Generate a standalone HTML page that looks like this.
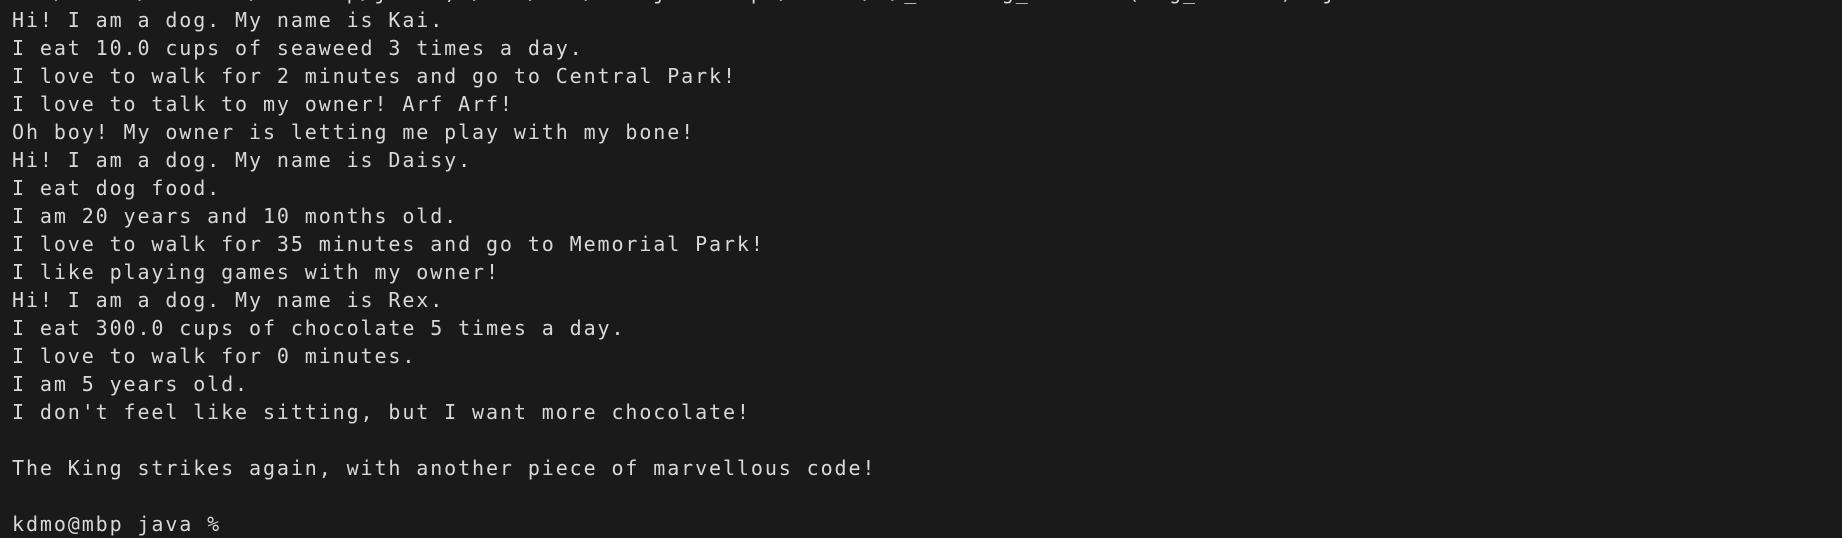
<!DOCTYPE html>
<html><head><meta charset="utf-8"><style>
html,body{margin:0;padding:0;background:#1a1a1a;width:1842px;height:514px;overflow:hidden}
pre{position:absolute;left:12px;top:-22px;margin:0;font-family:"DejaVu Sans Mono","Liberation Mono",monospace;font-size:20px;letter-spacing:1.9px;line-height:28px;color:#d8d8d8}
</style></head><body><pre>cd /Users/student/Desktop/java ; /usr/bin/env java -cp /Users/a/_bin Dog_Tester (Dog_Tester) .java
Hi! I am a dog. My name is Kai.
I eat 10.0 cups of seaweed 3 times a day.
I love to walk for 2 minutes and go to Central Park!
I love to talk to my owner! Arf Arf!
Oh boy! My owner is letting me play with my bone!
Hi! I am a dog. My name is Daisy.
I eat dog food.
I am 20 years and 10 months old.
I love to walk for 35 minutes and go to Memorial Park!
I like playing games with my owner!
Hi! I am a dog. My name is Rex.
I eat 300.0 cups of chocolate 5 times a day.
I love to walk for 0 minutes.
I am 5 years old.
I don't feel like sitting, but I want more chocolate!

The King strikes again, with another piece of marvellous code!

kdmo@mbp java % 
</pre></body></html>
